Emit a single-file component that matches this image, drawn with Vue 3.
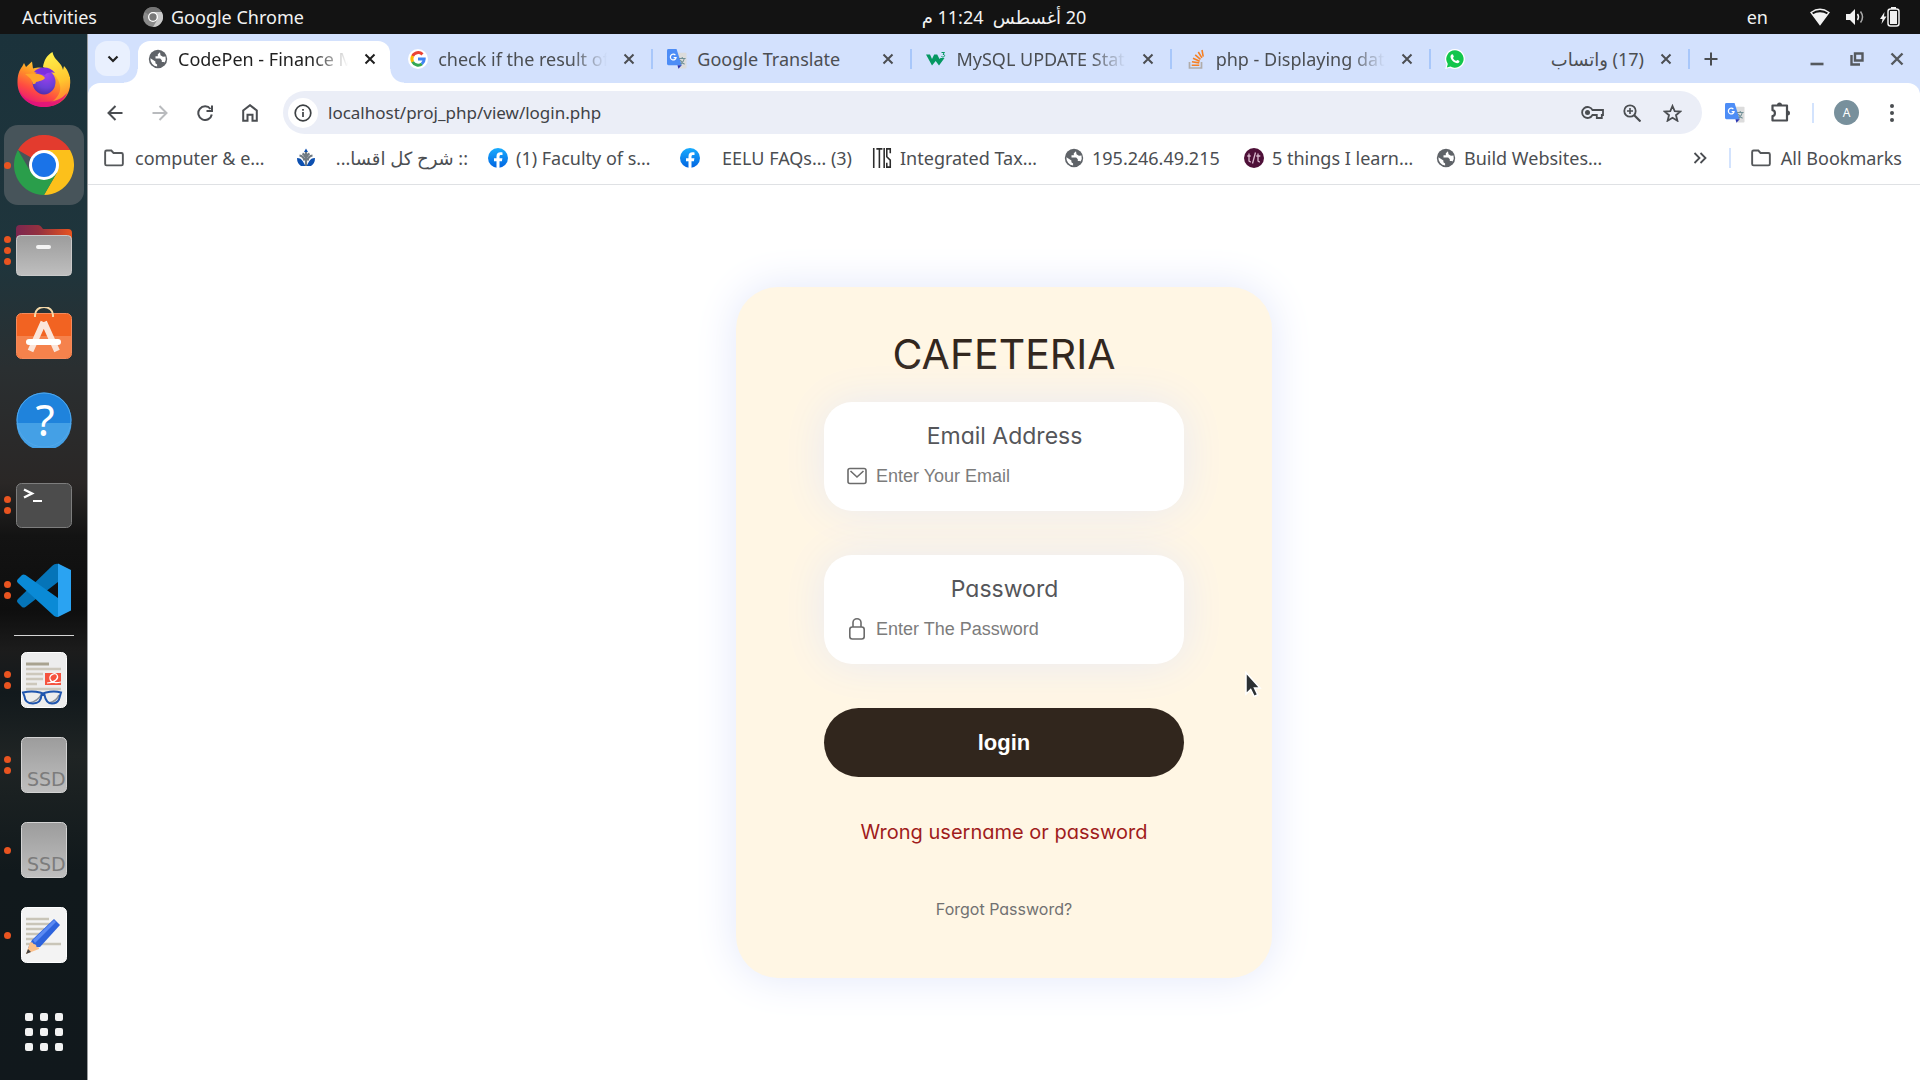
<script setup>
import { ref } from 'vue'

const address = ref('localhost/proj_php/view/login.php')
const email = ref('')
const password = ref('')

const tabs = [
  { icon: 'globe', title: 'CodePen - Finance M', active: true },
  { icon: 'google', title: 'check if the result of' },
  { icon: 'translate', title: 'Google Translate' },
  { icon: 'w3', title: 'MySQL UPDATE Stat' },
  { icon: 'stack', title: 'php - Displaying dat' },
  { icon: 'whatsapp', title: '(17) واتساب', rtl: true },
]

const bookmarks = [
  { icon: 'folder', title: 'computer & e…' },
  { icon: 'lotus', title: ':: شرح كل اقسا...', rtl: true },
  { icon: 'facebook', title: '(1) Faculty of s…' },
  { icon: 'facebook', title: 'EELU FAQs… (3)', end: true },
  { icon: 'itis', title: 'Integrated Tax…' },
  { icon: 'globe', title: '195.246.49.215', short: true },
  { icon: 'tft', title: '5 things I learn…' },
  { icon: 'globe', title: 'Build Websites…' },
]

const dock = [
  { name: 'Firefox', icon: 'firefox', windows: 0 },
  { name: 'Google Chrome', icon: 'chrome', windows: 1, active: true },
  { name: 'Files', icon: 'files', windows: 3 },
  { name: 'Ubuntu Software', icon: 'software', windows: 0 },
  { name: 'Help', icon: 'help', windows: 0 },
  { name: 'Terminal', icon: 'terminal', windows: 2 },
  { name: 'Visual Studio Code', icon: 'vscode', windows: 2 },
]

const places = [
  { name: 'Document Viewer', icon: 'evince', windows: 2 },
  { name: 'SSD volume 1', icon: 'ssd', windows: 2 },
  { name: 'SSD volume 2', icon: 'ssd', windows: 1 },
  { name: 'Text Editor', icon: 'editor', windows: 1 },
]
</script>

<template>
  <svg class="defs" aria-hidden="true">
    <defs>
      <linearGradient id="fx-body" x1="0.8" y1="0" x2="0.3" y2="1">
        <stop offset="0" stop-color="#fff14a" />
        <stop offset="0.4" stop-color="#ff9a26" />
        <stop offset="0.7" stop-color="#ff4a42" />
        <stop offset="1" stop-color="#e5137c" />
      </linearGradient>
      <linearGradient id="fx-flame" x1="0.4" y1="0" x2="0.6" y2="1">
        <stop offset="0" stop-color="#fff04a" />
        <stop offset="0.6" stop-color="#ffc52e" />
        <stop offset="1" stop-color="#ff7e30" />
      </linearGradient>
      <radialGradient id="fx-orb" cx="0.6" cy="0.2" r="0.9">
        <stop offset="0" stop-color="#a03ff0" />
        <stop offset="0.6" stop-color="#6a3fd6" />
        <stop offset="1" stop-color="#47289c" />
      </radialGradient>
      <linearGradient id="folder-back" x1="0" x2="1">
        <stop offset="0" stop-color="#7c2750" />
        <stop offset="0.4" stop-color="#93303f" />
        <stop offset="1" stop-color="#e9541f" />
      </linearGradient>
      <linearGradient id="grey-face" x1="0" y1="0" x2="0" y2="1">
        <stop offset="0" stop-color="#9c9c9c" />
        <stop offset="1" stop-color="#bfbfbf" />
      </linearGradient>
      <linearGradient id="fb-face" x1="0" y1="0" x2="0" y2="1">
        <stop offset="0" stop-color="#18acfe" />
        <stop offset="1" stop-color="#0163e0" />
      </linearGradient>
      <symbol id="globe" viewBox="0 0 20 20">
        <circle cx="10" cy="10" r="9.200" fill="#5f6368" />
        <path d="M11.500 2.800c1.800.4 3.300 1.300 4.300 2.700l-1.300 1.700h-2.300l-1 1.500 1.500 1.400h3.200l1.200-1c.2 2.500-.6 4.500-2.200 6-1.200 1.200-2.700 1.900-4.400 2l-.5-2.200 1.800-1.700-1-1.600-2.800-.8-1.200-2.200-4-.4c.4-2 1.400-3.500 2.900-4.500l.8 1.800 2.200.2 2-1.500z" fill="#fff" opacity="0" />
        <path d="M12 3.200L9.800 5.300v2H7.500v2.200h4.700l1.600 1.700v1.700h1.800l1 .6a7.600 7.600 0 0 0 .9-6l-2.600.2-2.400-1.500z" fill="#fff" />
        <path d="M2.400 9.300l5 3.200v1.700l1.700 1.400v1.900A7.600 7.600 0 0 1 2.400 9.300z" fill="#fff" />
      </symbol>
      <symbol id="google" viewBox="0 0 20 20">
        <circle cx="10" cy="10" r="10" fill="#fff" />
        <g fill="none" stroke-width="3">
          <path d="M14.500 5.400A6.200 6.200 0 0 0 4.600 7.100" stroke="#ea4335" />
          <path d="M4.700 7A6.200 6.200 0 0 0 4.700 13" stroke="#fbbc05" />
          <path d="M4.600 12.900A6.200 6.200 0 0 0 14 14.800" stroke="#34a853" />
          <path d="M13.800 14.900A6.200 6.200 0 0 0 16.200 10H10" stroke="#4285f4" />
        </g>
      </symbol>
      <symbol id="translate" viewBox="0 0 21 21">
        <path d="M7 4h12.500q1 0 1 1v14.500q0 1-1 1H12z" fill="#dcdcdc" />
        <path d="M1.500 0H10l5.500 17H1.500Q0 17 0 15.500v-14Q0 0 1.500 0z" fill="#4d8df6" />
        <path d="M11 17h4.500L12 20.800z" fill="#2a35b5" />
        <path d="M8.800 6.500A3 3 0 1 0 9.500 9H7" fill="none" stroke="#fff" stroke-width="1.300" />
        <path d="M12.500 10h7M16 8.500V10M18.200 10c-.5 2.600-2 4.500-4 6M14 11.500c.8 2 2.500 3.700 4.500 4.600" fill="none" stroke="#6f8f96" stroke-width="1.100" />
      </symbol>
      <symbol id="w3" viewBox="0 0 20 20">
        <path d="M0 5.500h4l2 4.500 2.200-4.500h3l2.300 4.500 1-1h4L13 16.500l-3.300-4.500-3.700 4.500z" fill="#059862" />
        <path d="M15.500 3.500h3l-1.500 1.800c2.200 0 2.200 2.700-.2 2.700-.7 0-1.200-.3-1.500-.7" fill="none" stroke="#059862" stroke-width="1" />
      </symbol>
      <symbol id="stack" viewBox="0 0 18 20">
        <path d="M2.500 13v6h12v-6" fill="none" stroke="#b0acaa" stroke-width="1.700" />
        <path d="M4.700 16.300h7.600M4.900 12.800l7.400 1.100M6 9.200l6.700 3M8.200 5.800l5.300 4.600M11.300 3l3.600 5.800M15 1l1.200 6.700" stroke="#f58025" stroke-width="1.600" />
      </symbol>
      <symbol id="whatsapp" viewBox="0 0 20 20">
        <path d="M10 0a10 10 0 1 1-5 18.700L.2 20l1.200-4.900A10 10 0 0 1 10 0z" fill="#fff" />
        <path d="M10 1.300a8.700 8.700 0 1 1-4.500 16.200l-3.700 1 1-3.600A8.700 8.700 0 0 1 10 1.300z" fill="#12c64b" />
        <path d="M6.600 5.600c.6-.5 1.400-.3 1.600.3l.6 1.500c.1.600-.8 1-.8 1.500.6 1.300 1.700 2.300 3 2.900.6 0 1-.9 1.500-.8l1.700.8c.5.300.2 1.600-.4 2-2.500 1.700-8.700-2.300-8.300-6.500.1-.7.500-1.300 1.100-1.700z" fill="#fff" />
      </symbol>
      <symbol id="folder" viewBox="0 0 21 18">
        <path d="M1.200 2.700q0-1.500 1.500-1.500h5l2.300 2.500h8.300q1.500 0 1.500 1.500v10q0 1.500-1.500 1.500H2.700q-1.500 0-1.500-1.500z" fill="none" stroke="#55585b" stroke-width="2" />
      </symbol>
      <symbol id="lotus" viewBox="0 0 20 20">
        <path d="M3.500 7.500c2.500.3 4.300 2 5 5M16.500 7.500c-2.500.3-4.300 2-5 5M10 4v14M6.500 5.500q2 1 3 3.500M13.500 5.500q-2 1-3 3.500" fill="none" stroke="#707a82" stroke-width="2.200" />
        <path d="M1 10c3 0 4.500 1 6 3.500L9.500 18H5Q1 15.500 1 10zM19 10c-3 0-4.500 1-6 3.500L10.500 18H15q4-2.500 4-8z" fill="#0d50b0" />
        <path d="M10 0.500l2 3.500H8z" fill="#0d50b0" />
      </symbol>
      <symbol id="facebook" viewBox="0 0 20 20">
        <circle cx="10" cy="10" r="10" fill="url(#fb-face)" />
        <path d="M8.500 20v-6.800H6v-3h2.500V8.500c0-3 1.400-4.300 4-4.300.8 0 1.500.1 2 .2v2.500h-1.400c-1.200 0-1.600.6-1.600 1.700v1.600h2.900l-.5 3h-2.400V20z" fill="#fff" />
      </symbol>
      <symbol id="itis" viewBox="0 0 21 23">
        <path d="M1 0v23M4 1h7M7.500 1v22M13 0v23M20 6V1h-4v9l4 4v8h-4v-5" fill="none" stroke="#2c2c2c" stroke-width="1.800" />
      </symbol>
      <symbol id="tft" viewBox="0 0 20 20">
        <circle cx="10" cy="10" r="10" fill="#4e1038" />
        <path d="M5 5.500v7q0 1.500 2 1.300M3.300 8h3.400M11.500 4.500L8.500 15.500M14 5.500v7q0 1.500 2 1.300M12.300 8h4" fill="none" stroke="#d9b9ce" stroke-width="1.300" />
      </symbol>

      <symbol id="firefox" viewBox="0 0 56 56">
        <path d="M1.500 31c0-8 1.500-12.500 5-17l1.500-3 2 4 6-5.500 1 7c7-2 9.500-1 13 1L54 25v7c0 14-12 23-26 23S1.500 45 1.500 31z" fill="url(#fx-body)" />
        <path d="M27 15c1-7 4-12 9.500-15 1 6 5 8 8.500 13 1 1.500 1.500 3 2 5l1-4c5 5 7 13 6 19-2 10-9 17-20 18 10-6 12-14 9-21-3-8-9-11-16-15z" fill="url(#fx-flame)" />
        <path d="M3 38c4 8 12 13 24 12 12 0 19-3 24-9-3 8-12 14-23 14S5 48 3 38z" fill="#e0127d" opacity="0.800" />
        <ellipse cx="28" cy="30" rx="11.500" ry="12.500" fill="url(#fx-orb)" />
        <path d="M18 20c4-5 15-7 21 1-6-1-9 0-10 2z" fill="#7b2ee0" />
        <path d="M9 22c8-1 17-1 20 4-2 3-6 3-9 4 0 2-2 2-3 2-1-5-4-7-8-10z" fill="#ffa72a" />
      </symbol>
      <symbol id="chrome" viewBox="0 0 60 60">
        <path d="M30 30L4 15A30 30 0 0 1 56 15z" fill="#e33b2e" />
        <path d="M30 15h26A30 30 0 0 1 30 60l13-22.500z" fill="#fcc01b" />
        <path d="M4 15l13 22.500 26 0L30 60A30 30 0 0 1 4 15z" fill="#2a9e4b" />
        <path d="M30 15h26l-20 10z" fill="#fcc01b" />
        <circle cx="30" cy="30" r="15" fill="#fff" />
        <circle cx="30" cy="30" r="12" fill="#1a73e8" />
      </symbol>
      <symbol id="files" viewBox="0 0 56 56">
        <path d="M0 18V7q0-4 4-4h18q2 0 3 1.500L27 7h25q4 0 4 4v10z" fill="url(#folder-back)" />
        <rect x="0.500" y="13.500" width="55" height="40" rx="4" fill="url(#grey-face)" stroke="#c9c9c9" />
        <rect x="20" y="23" width="15" height="4" rx="2" fill="#f4f4f4" />
      </symbol>
      <symbol id="software" viewBox="0 3 56 56">
        <rect x="0.500" y="9.500" width="55" height="45" rx="5" fill="#f26322" stroke="#f58a5b" />
        <path d="M1 32h54v17q0 5-5 5H6q-5 0-5-5z" fill="#f5824c" />
        <path d="M19 13V11a9 8 0 0 1 18 0v2" fill="none" stroke="#f6d9a8" stroke-width="2" />
        <path d="M27.500 18L14.500 47M28 18l13 29" stroke="#fbe5da" stroke-width="6" />
        <rect x="10" y="35" width="35" height="6" rx="3" fill="#fff" />
      </symbol>
      <symbol id="help" viewBox="0 0 56 56">
        <circle cx="28" cy="28" r="27.500" fill="#1f83dc" />
        <path d="M.5 31h55A27.500 27.500 0 0 1 .5 31z" fill="#44a0e6" />
        <circle cx="28" cy="28" r="27" fill="none" stroke="#51a8ea" />
        <text x="29" y="44" text-anchor="middle" font-family="Noto Sans, sans-serif" font-size="44" fill="#fff">?</text>
      </symbol>
      <symbol id="terminal" viewBox="0 0 56 56">
        <rect x="0.500" y="6.500" width="55" height="44" rx="5" fill="#4c4c4c" stroke="#7d7d7d" />
        <path d="M8 12.500l8 4-8 4" fill="none" stroke="#fff" stroke-width="2.400" />
        <path d="M17 24h9" stroke="#fff" stroke-width="2" />
      </symbol>
      <symbol id="vscode" viewBox="0 0 56 56">
        <path d="M42 2C40 1.500 38 2.500 36 4L2 37q-2 2 0 4l4 4q1.500 1 3.500 0L42 20z" fill="#0574b8" />
        <path d="M42 55C40 55.500 38 54 36 52L2 21q-2-2 0-4l4-4q1.500-1 3.500 0L42 36z" fill="#0a8ad6" />
        <path d="M42 1.500L55 8v40.500L42 55z" fill="#2aa3f2" />
      </symbol>
      <symbol id="evince" viewBox="0 0 56 56">
        <rect x="5.500" y="0.500" width="45" height="55" rx="5" fill="#ededed" stroke="#fff" />
        <path d="M10 12h23" stroke="#a9a390" stroke-width="3" />
        <path d="M10 17h35M10 22h17M10 27h17M10 32h11M10 37h35" stroke="#cdc8bc" stroke-width="2.600" />
        <rect x="29" y="21" width="16" height="12" fill="#f5533f" />
        <path d="M31 31c9-1 12-5 10-8s-8 0-7 4 7 4 11 3" fill="none" stroke="#fff" stroke-width="1.200" />
        <path d="M13 51Q22 49 25 43M33 51q8-2 10-8" fill="none" stroke="#8a8f96" stroke-width="1.600" />
        <path d="M7 40.500q9-2 17 0l3 1 3-1q8-2 15 0l-2 7q-2 4-7 4-6 0-7.500-8.500h-3Q25 51.500 17 51.500q-8 0-8.500-7z" fill="none" stroke="#1f55ae" stroke-width="2" />
      </symbol>
      <symbol id="ssd" viewBox="0 0 56 56">
        <rect x="5.500" y="0.500" width="45" height="55" rx="5" fill="url(#grey-face)" stroke="#d2d2d2" />
        <text x="11" y="49" font-family="DejaVu Sans, sans-serif" font-size="19" fill="#7c7c7c">SSD</text>
      </symbol>
      <symbol id="editor" viewBox="0 0 56 56">
        <rect x="5.500" y="0.500" width="45" height="55" rx="5" fill="#f3f3f3" stroke="#fff" />
        <path d="M10 12h23M10 17h24M10 22h18M10 27h16M10 32h16M10 37h35" stroke="#c9c5b8" stroke-width="2.600" />
        <path d="M12 41l4-8 22-21 6 6-20 22z" fill="#2d63dc" />
        <path d="M17 33l21-20 2 2L19 36z" fill="#5b8af3" />
        <path d="M10 47l4-11.500q3-1 3.500 1.500 3 0 3 3 3 0 2.500 2z" fill="#fbc08b" />
        <path d="M10 47l2-5 3 3z" fill="#444" />
      </symbol>
    </defs>
  </svg>

  <div class="desktop">
    <header class="topbar">
      <div class="topbar-left">
        <button class="topbar-item" type="button">Activities</button>
        <button class="topbar-item app-menu" type="button">
          <svg width="20" height="20" viewBox="0 0 60 60" aria-hidden="true">
            <circle cx="30" cy="30" r="30" fill="#8a8a8a" />
            <path d="M30 30L4 15A30 30 0 0 1 56 15z" fill="#747474" />
            <path d="M30 15h26A30 30 0 0 1 30 60l13-22z" fill="#c9c9c9" />
            <circle cx="30" cy="30" r="15" fill="#fff" />
            <circle cx="30" cy="30" r="11" fill="#777" />
          </svg>
          Google Chrome
        </button>
      </div>
      <time class="clock" dir="rtl">20 أغسطس&nbsp; 11:24 م</time>
      <div class="topbar-right">
        <button class="topbar-item" type="button">en</button>
        <button class="topbar-item status" type="button" aria-label="System menu">
          <svg width="20" height="18" viewBox="0 0 20 18"><path d="M1 4.500Q10-2 19 4.500L10 16.500z" fill="none" stroke="#f2f2f2" stroke-width="1.400" /><path d="M2.500 6.500Q10 2 17.500 6.500L10 16.500z" fill="#f2f2f2" /></svg>
          <svg width="20" height="18" viewBox="0 0 20 18"><path d="M1 6h4l5-5v16l-5-5H1z" fill="#f2f2f2" /><path d="M12.500 6q2 3 0 6" fill="none" stroke="#f2f2f2" stroke-width="1.500" /><path d="M15.500 3.500q4 5.500 0 11" fill="none" stroke="#aaa" stroke-width="1.500" /></svg>
          <svg width="20" height="20" viewBox="0 0 20 20"><path d="M4.500 5L0 12h2.500L1.500 17 6.500 9.500H4z" fill="#f2f2f2" /><path d="M11 0h5v2h-5z" fill="#f2f2f2" /><rect x="8" y="2" width="11" height="17" rx="2.500" fill="none" stroke="#f2f2f2" stroke-width="1.500" /><rect x="10" y="4" width="7" height="13" fill="#f2f2f2" /></svg>
        </button>
      </div>
    </header>

    <div class="workspace">
      <nav class="dock" aria-label="Dock">
        <button v-for="app in dock" :key="app.name" class="dock-item" :class="{ active: app.active }" type="button" :aria-label="app.name">
          <span class="dots"><i v-for="n in app.windows" :key="n"></i></span>
          <svg :class="app.icon === 'chrome' ? 'icon-large' : 'icon'" aria-hidden="true"><use :href="'#' + app.icon" /></svg>
        </button>
        <hr class="dock-line" />
        <button v-for="app in places" :key="app.name" class="dock-item" type="button" :aria-label="app.name">
          <span class="dots"><i v-for="n in app.windows" :key="n"></i></span>
          <svg class="icon" aria-hidden="true"><use :href="'#' + app.icon" /></svg>
        </button>
        <button class="dock-item apps" type="button" aria-label="Show applications">
          <span class="app-grid"><i v-for="n in 9" :key="n"></i></span>
        </button>
      </nav>

      <div class="browser">
        <div class="tabstrip">
          <button class="tab-search" type="button" aria-label="Search tabs">
            <svg width="12" height="8" viewBox="0 0 12 8"><path d="M1.500 1.500L6 6l4.500-4.500" fill="none" stroke="#222" stroke-width="2.200" /></svg>
          </button>
          <div class="tabs">
            <div v-for="tab in tabs" :key="tab.title" class="tab" :class="{ active: tab.active }">
              <svg class="favicon" aria-hidden="true"><use :href="'#' + tab.icon" /></svg>
              <span class="tab-title" :class="{ fade: !tab.rtl && tab.icon !== 'translate' }" :dir="tab.rtl ? 'rtl' : 'ltr'">{{ tab.title }}</span>
              <button class="tab-close" type="button" aria-label="Close tab">
                <svg width="12" height="12" viewBox="0 0 12 12"><path d="M1.500 1.500l9 9M10.500 1.500l-9 9" stroke="currentColor" stroke-width="2" /></svg>
              </button>
            </div>
          </div>
          <div class="strip-end">
            <button class="square" type="button" aria-label="New tab">
              <svg width="14" height="14" viewBox="0 0 14 14"><path d="M7 0.500v13M0.500 7h13" stroke="#4a4d51" stroke-width="2" /></svg>
            </button>
            <div class="window-controls">
              <button class="square" type="button" aria-label="Minimize">
                <svg width="14" height="14" viewBox="0 0 14 14"><path d="M0.500 12h13" stroke="#55595e" stroke-width="2.600" /></svg>
              </button>
              <button class="square" type="button" aria-label="Restore">
                <svg width="14" height="14" viewBox="0 0 14 14"><path d="M5 1.500h7.500v7H5zM1.500 3v9.500H10" fill="none" stroke="#55595e" stroke-width="2.400" /></svg>
              </button>
              <button class="square" type="button" aria-label="Close window">
                <svg width="14" height="14" viewBox="0 0 14 14"><path d="M1.500 1.500l11 11M12.500 1.500l-11 11" stroke="#55595e" stroke-width="2.400" /></svg>
              </button>
            </div>
          </div>
        </div>

        <div class="chrome-panel">
          <div class="toolbar">
            <div class="nav-buttons">
              <button class="nav-button" type="button" aria-label="Back">
                <svg width="16" height="16" viewBox="0 0 16 16"><path d="M15.500 8H2M8.500 1L1.500 8l7 7" fill="none" stroke="#4a4d51" stroke-width="2" /></svg>
              </button>
              <button class="nav-button" type="button" aria-label="Forward" disabled>
                <svg width="16" height="16" viewBox="0 0 16 16"><path d="M.5 8H14M7.500 1l7 7-7 7" fill="none" stroke="#b9bbbe" stroke-width="2" /></svg>
              </button>
              <button class="nav-button" type="button" aria-label="Reload">
                <svg width="16" height="16" viewBox="0 0 16 16"><path d="M13.500 4A6.800 6.800 0 1 0 14.800 9.500M15 .5V6H9.500" fill="none" stroke="#4a4d51" stroke-width="2" /></svg>
              </button>
              <button class="nav-button" type="button" aria-label="Home">
                <svg width="16" height="18" viewBox="0 0 16 18"><path d="M1.200 6.500L8 1.200l6.800 5.300v10.300h-4.300v-6h-5v6H1.200z" fill="none" stroke="#4a4d51" stroke-width="2" /></svg>
              </button>
            </div>
            <div class="omnibox">
              <button class="site-info" type="button" aria-label="Site information">
                <svg width="18" height="18" viewBox="0 0 18 18"><circle cx="9" cy="9" r="7.800" fill="none" stroke="#3c4043" stroke-width="1.700" /><path d="M9 8v5M9 5v1.700" stroke="#3c4043" stroke-width="1.700" /></svg>
              </button>
              <input v-model="address" class="address" type="text" aria-label="Address" />
              <div class="omni-icons">
                <button class="square" type="button" aria-label="Passwords">
                  <svg width="23" height="13" viewBox="0 0 23 13"><path d="M11.500 4H22v5h-1.200v3h-5V9h-4.300A5.500 5.500 0 1 1 11.500 4z" fill="none" stroke="#4a4d51" stroke-width="1.800" /><circle cx="6.500" cy="6.500" r="2.500" fill="#4a4d51" /></svg>
                </button>
                <button class="square" type="button" aria-label="Zoom">
                  <svg width="18" height="18" viewBox="0 0 18 18"><circle cx="7" cy="7" r="5.700" fill="none" stroke="#4a4d51" stroke-width="1.800" /><path d="M11 11l6.500 6.500" stroke="#4a4d51" stroke-width="2.200" /><path d="M7 4v6M4 7h6" stroke="#4a4d51" stroke-width="1.600" /></svg>
                </button>
                <button class="square" type="button" aria-label="Bookmark this page">
                  <svg width="19" height="18" viewBox="0 0 19 18"><path d="M9.500 2l2.200 5.200 5.600.4-4.300 3.600 1.400 5.500-4.900-3-4.900 3L6 11.200 1.700 7.600l5.600-.4z" fill="none" stroke="#4a4d51" stroke-width="1.800" /></svg>
                </button>
              </div>
            </div>
            <div class="extensions">
              <button class="square" type="button" aria-label="Google Translate">
                <svg width="20" height="20"><use href="#translate" /></svg>
              </button>
              <button class="square" type="button" aria-label="Extensions">
                <svg width="21" height="21" viewBox="0 0 21 21"><path d="M2.500 3.500h14.500v15H2.500v-4.300c3.200-.6 3.200-5.400 0-6z" fill="none" stroke="#4a4d51" stroke-width="2.200" stroke-linejoin="round" /><path d="M7 3a2.500 2.500 0 0 1 5 0zM17.500 8.500a2.500 2.500 0 0 1 0 5z" fill="#4a4d51" /></svg>
              </button>
              <span class="divider"></span>
              <button class="avatar" type="button" aria-label="Profile">A</button>
              <button class="square" type="button" aria-label="Menu">
                <svg width="4" height="18" viewBox="0 0 4 18"><g fill="#4a4d51"><circle cx="2" cy="2" r="2" /><circle cx="2" cy="9" r="2" /><circle cx="2" cy="16" r="2" /></g></svg>
              </button>
            </div>
          </div>

          <nav class="bookmarks" aria-label="Bookmarks">
            <a v-for="mark in bookmarks" :key="mark.title" href="#" class="bookmark" :class="{ short: mark.short, folder: mark.icon === 'folder' }">
              <svg class="mark-icon" aria-hidden="true"><use :href="'#' + mark.icon" /></svg>
              <span class="mark-title" :class="{ end: mark.end }" :dir="mark.rtl ? 'rtl' : 'ltr'">{{ mark.title }}</span>
            </a>
            <div class="bookmarks-end">
              <button class="square" type="button" aria-label="More bookmarks">
                <svg width="14" height="12" viewBox="0 0 14 12"><path d="M1.500 1l5 5-5 5M7.500 1l5 5-5 5" fill="none" stroke="#4a4d51" stroke-width="1.800" /></svg>
              </button>
              <span class="divider"></span>
              <a href="#" class="all-bookmarks">
                <svg class="mark-icon" aria-hidden="true"><use href="#folder" /></svg>
                All Bookmarks
              </a>
            </div>
          </nav>
        </div>

        <main class="page">
          <form class="card" @submit.prevent>
            <h1 class="title">CAFETERIA</h1>
            <div class="field">
              <label for="email">Email Address</label>
              <div class="field-row">
                <svg width="20" height="18" viewBox="0 0 20 18" aria-hidden="true"><rect x="1" y="1.500" width="18" height="15" rx="2" fill="none" stroke="#6b6b6b" stroke-width="1.600" /><path d="M3.500 4l6.500 6 6.500-6" fill="none" stroke="#6b6b6b" stroke-width="1.600" /></svg>
                <input id="email" v-model="email" type="email" placeholder="Enter Your Email" />
              </div>
            </div>
            <div class="field">
              <label for="password">Password</label>
              <div class="field-row">
                <svg width="20" height="22" viewBox="0 0 20 22" aria-hidden="true"><rect x="2.800" y="9" width="14.400" height="12" rx="2.500" fill="none" stroke="#6b6b6b" stroke-width="1.600" /><path d="M6 9V4.500a4 3.700 0 0 1 8 0V9" fill="none" stroke="#6b6b6b" stroke-width="1.600" /></svg>
                <input id="password" v-model="password" type="password" placeholder="Enter The Password" />
              </div>
            </div>
            <button class="login" type="submit">login</button>
            <p class="error" role="alert">Wrong username or password</p>
            <a class="forgot" href="#">Forgot Password?</a>
            <svg class="pointer" width="18" height="28" viewBox="0 0 18 28" aria-hidden="true"><path d="M2 1.500V23l4.700-4.500 3.500 7 3.600-1.700-3.300-6.800H16z" fill="#2c3033" stroke="#fff" stroke-width="1.500" /></svg>
          </form>
        </main>
      </div>
    </div>
  </div>
</template>

<style>
body {
  margin: 0;
}
</style>

<style scoped>
.defs {
  position: absolute;
  width: 0;
  height: 0;
}

.desktop {
  display: flex;
  flex-direction: column;
  min-height: 100vh;
  font-family: "Noto Sans", "DejaVu Sans", sans-serif;
  font-size: 18px;
  color: #4b4e52;
}

button {
  display: flex;
  align-items: center;
  justify-content: center;
  padding: 0;
  border: 0;
  background: none;
  font: inherit;
  color: inherit;
}

a {
  color: inherit;
  text-decoration: none;
}

svg {
  flex: none;
}

/* GNOME top bar */
.topbar {
  display: grid;
  grid-template-columns: 1fr auto 1fr;
  align-items: center;
  height: 34px;
  background: #131313;
  color: #f2f2f2;
}

.topbar-left {
  display: flex;
  gap: 46px;
  padding-left: 22px;
}

.topbar-right {
  display: flex;
  justify-content: flex-end;
  gap: 42px;
  padding-right: 20px;
}

.app-menu {
  gap: 8px;
}

.status {
  gap: 15px;
}

.clock {
  white-space: nowrap;
  padding-left: 88px;
}

.workspace {
  display: flex;
  flex: 1;
}

/* Dock */
.dock {
  display: flex;
  flex-direction: column;
  flex: none;
  box-sizing: border-box;
  width: 88px;
  padding: 6px 0 8px;
  border-right: 1px solid #9a9c9e;
  background: linear-gradient(#1b323b 0%, #1f353c 22%, #2a2f31 32%, #2a2726 43%, #131313 48%, #0e0e0e 55%, #1c1c1c 59%, #12191c 63%, #1f2424 69%, #11191c 80%, #11181c 100%);
}

.dock-item {
  position: relative;
  width: 80px;
  height: 80px;
  margin: 0 3px 5px 4px;
  border-radius: 14px;
}

.dock-item.active {
  background: #47545a;
}

.icon {
  width: 56px;
  height: 56px;
}

.icon-large {
  width: 60px;
  height: 60px;
}

.dots {
  position: absolute;
  left: 0;
  top: 0;
  bottom: 0;
  display: flex;
  flex-direction: column;
  justify-content: center;
  gap: 4px;
}

.dots i {
  width: 7px;
  height: 7px;
  border-radius: 50%;
  background: #e95420;
}

.dock-line {
  width: 60px;
  height: 1px;
  margin: 0 14px 4px;
  border: 0;
  background: #d5d5d5;
}

.dock-item.apps {
  margin-top: auto;
  margin-bottom: 0;
}

.app-grid {
  display: grid;
  grid-template-columns: repeat(3, 8px);
  gap: 7px;
}

.app-grid i {
  height: 8px;
  border-radius: 2px;
  background: #f2f2f2;
}

/* Browser window */
.browser {
  display: flex;
  flex: 1;
  flex-direction: column;
  min-width: 0;
  background: #d3e1fd;
}

.tabstrip {
  display: flex;
  height: 49px;
  padding-left: 7px;
}

.tab-search {
  width: 35px;
  height: 35px;
  margin: 7px 5px 0 0;
  border-radius: 12px;
  background: #e9f0fe;
}

.tabs {
  display: grid;
  flex: 1;
  grid-template-columns: repeat(6, minmax(0, 1fr));
  min-width: 0;
}

.tab {
  position: relative;
  display: flex;
  align-items: center;
  min-width: 0;
  height: 35px;
  margin-top: 7px;
  padding: 0 12px 0 14px;
}

.tab:not(.active)::after {
  content: "";
  position: absolute;
  right: 0;
  top: 8px;
  width: 2px;
  height: 20px;
  background: #a8c7fa;
}

.tab.active {
  height: 42px;
  box-sizing: border-box;
  margin-left: 3px;
  margin-right: 4px;
  padding: 0 8px 7px 10px;
  border-radius: 12px 12px 0 0;
  background: #fff;
  color: #1f1f1f;
}

.tab.active::before,
.tab.active::after {
  content: "";
  position: absolute;
  bottom: 0;
  width: 14px;
  height: 14px;
}

.tab.active::before {
  left: -14px;
  background: radial-gradient(circle at 0 0, transparent 13px, #fff 14px);
}

.tab.active::after {
  right: -14px;
  background: radial-gradient(circle at 100% 0, transparent 13px, #fff 14px);
}

.favicon {
  width: 20px;
  height: 20px;
  margin-right: 10px;
}

.tab-title {
  flex: 1;
  min-width: 0;
  overflow: hidden;
  white-space: nowrap;
}

.tab-title.fade {
  mask-image: linear-gradient(to right, #000 calc(100% - 36px), transparent);
}

.tab-close {
  width: 24px;
  height: 24px;
  margin-left: 10px;
}

.strip-end {
  display: flex;
  justify-content: space-between;
  box-sizing: border-box;
  width: 230px;
  height: 49px;
  padding: 0 9px 0 7px;
}

.window-controls {
  display: flex;
  gap: 12px;
}

.square {
  width: 28px;
  height: 28px;
}

.strip-end .square {
  margin-top: 11px;
}

.chrome-panel {
  border-bottom: 1px solid #dfe1e4;
  border-radius: 12px 12px 0 0;
  background: #fff;
}

.toolbar {
  display: flex;
  align-items: center;
  padding: 8px 14px 0 12px;
}

.nav-buttons {
  display: flex;
  gap: 15px;
}

.nav-button {
  width: 30px;
  height: 30px;
}

.omnibox {
  display: flex;
  flex: 1;
  align-items: center;
  box-sizing: border-box;
  height: 43px;
  margin-left: 18px;
  padding: 0 16px 0 5px;
  border-radius: 22px;
  background: #ebeef7;
}

.site-info {
  width: 30px;
  height: 30px;
  border-radius: 50%;
  background: #fff;
}

.address {
  flex: 1;
  min-width: 0;
  padding: 0;
  margin-left: 10px;
  border: 0;
  outline: 0;
  background: none;
  font: inherit;
  font-size: 17px;
  color: #3f4246;
}

.omni-icons {
  display: flex;
  gap: 12px;
}

.extensions {
  display: flex;
  align-items: center;
  margin-left: 19px;
}

.extensions .square + .square {
  margin-left: 17px;
}

.divider {
  width: 2px;
  height: 20px;
  background: #d3e3fd;
}

.extensions .divider {
  margin: 0 20px 0 18px;
}

.avatar {
  width: 25px;
  height: 25px;
  margin-right: 19px;
  border-radius: 50%;
  background: #78909c;
  color: #fff;
  font-size: 12px;
}

.bookmarks {
  display: flex;
  align-items: center;
  box-sizing: border-box;
  height: 50px;
  padding: 0 18px 2px 16px;
}

.bookmark {
  display: flex;
  align-items: center;
  gap: 8px;
  box-sizing: border-box;
  width: 192px;
  padding-right: 20px;
  white-space: nowrap;
}

.bookmark.folder {
  gap: 11px;
}

.bookmark.short {
  width: 180px;
}

.mark-icon {
  width: 20px;
  height: 20px;
}

.mark-title {
  flex: 1;
  min-width: 0;
}

.mark-title.end {
  text-align: right;
}

.bookmarks-end {
  display: flex;
  align-items: center;
  margin-left: auto;
}

.bookmarks-end .divider {
  margin: 0 20px 0 15px;
}

.all-bookmarks {
  display: flex;
  align-items: center;
  gap: 10px;
  white-space: nowrap;
}

/* Login page */
.page {
  display: flex;
  flex: 1;
  align-items: center;
  justify-content: center;
  background: #fff;
}

.card {
  position: relative;
  display: flex;
  flex-direction: column;
  align-items: center;
  box-sizing: border-box;
  width: 536px;
  padding: 37px 88px 57px;
  border-radius: 42px;
  background: #fff6e4;
  box-shadow: 0 0 44px #e2e7fa;
  font-family: Inter, sans-serif;
  font-feature-settings: "cv11";
}

.title {
  margin: 0 0 18px;
  font-size: 41px;
  font-weight: 400;
  line-height: 60px;
  color: #31261d;
}

.field {
  display: flex;
  flex-direction: column;
  align-items: center;
  box-sizing: border-box;
  width: 100%;
  height: 109px;
  margin-bottom: 44px;
  padding: 18px 22px 0 23px;
  border-radius: 28px;
  background: #fff;
  box-shadow: 0 0 44px #e9eaf4;
}

.field label {
  font-size: 23px;
  line-height: 32px;
  color: #55565a;
}

.field-row {
  display: flex;
  align-items: center;
  gap: 9px;
  width: 100%;
  height: 48px;
}

.field-row input {
  flex: 1;
  min-width: 0;
  padding: 0;
  border: 0;
  outline: 0;
  background: none;
  font: 18px "Liberation Sans", Arial, sans-serif;
}

.field-row input::placeholder {
  color: #7c7c7c;
}

.login {
  width: 100%;
  height: 69px;
  border-radius: 35px;
  background: #31261d;
  font: bold 22px "Liberation Sans", Arial, sans-serif;
  color: #fff;
}

.error {
  margin: 39px 0 49px;
  font-size: 20px;
  line-height: 32px;
  color: #a01c1c;
}

.forgot {
  font-size: 16px;
  line-height: 24px;
  color: #717171;
}

.pointer {
  position: absolute;
  right: 10px;
  top: 384px;
}
</style>
